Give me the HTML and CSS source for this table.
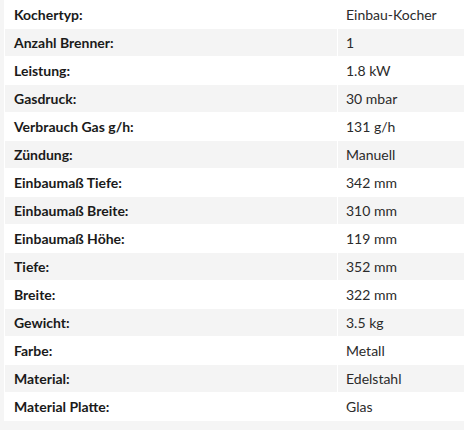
FILE: index.html
```html
<!DOCTYPE html>
<html lang="de">
<head>
<meta charset="utf-8">
<title>Technische Daten</title>
<link rel="stylesheet" href="styles.css">
</head>
<body>
<table class="specs">
<tbody>
<tr><th>Kochertyp:</th><td>Einbau-Kocher</td></tr>
<tr><th>Anzahl Brenner:</th><td>1</td></tr>
<tr><th>Leistung:</th><td>1.8 kW</td></tr>
<tr><th>Gasdruck:</th><td>30 mbar</td></tr>
<tr><th>Verbrauch Gas g/h:</th><td>131 g/h</td></tr>
<tr><th>Zündung:</th><td>Manuell</td></tr>
<tr><th>Einbaumaß Tiefe:</th><td>342 mm</td></tr>
<tr><th>Einbaumaß Breite:</th><td>310 mm</td></tr>
<tr><th>Einbaumaß Höhe:</th><td>119 mm</td></tr>
<tr><th>Tiefe:</th><td>352 mm</td></tr>
<tr><th>Breite:</th><td>322 mm</td></tr>
<tr><th>Gewicht:</th><td>3.5 kg</td></tr>
<tr><th>Farbe:</th><td>Metall</td></tr>
<tr><th>Material:</th><td>Edelstahl</td></tr>
<tr><th>Material Platte:</th><td>Glas</td></tr>
</tbody>
</table>
</body>
</html>
```
FILE: styles.css
```css
html, body {
  margin: 0;
  padding: 0;
}
body {
  background: #f5f5f5;
  padding-left: 4px;
  overflow: hidden;
  font-family: Lato, "Open Sans", sans-serif;
  font-size: 14px;
}
.specs {
  width: calc(100% + 4px);
  background: #ffffff;
  border-collapse: separate;
  border-spacing: 1px;
}
.specs th,
.specs td {
  height: 27px;
  padding: 0 9px;
  line-height: 27px;
  text-align: left;
  vertical-align: middle;
  white-space: nowrap;
}
.specs th {
  width: 314px;
  font-weight: bold;
  color: #1a1a1a;
}
.specs td {
  padding-left: 8px;
  color: #2b2b2b;
}
.specs tr:nth-child(even) th,
.specs tr:nth-child(even) td {
  background: #f4f4f4;
}
```
